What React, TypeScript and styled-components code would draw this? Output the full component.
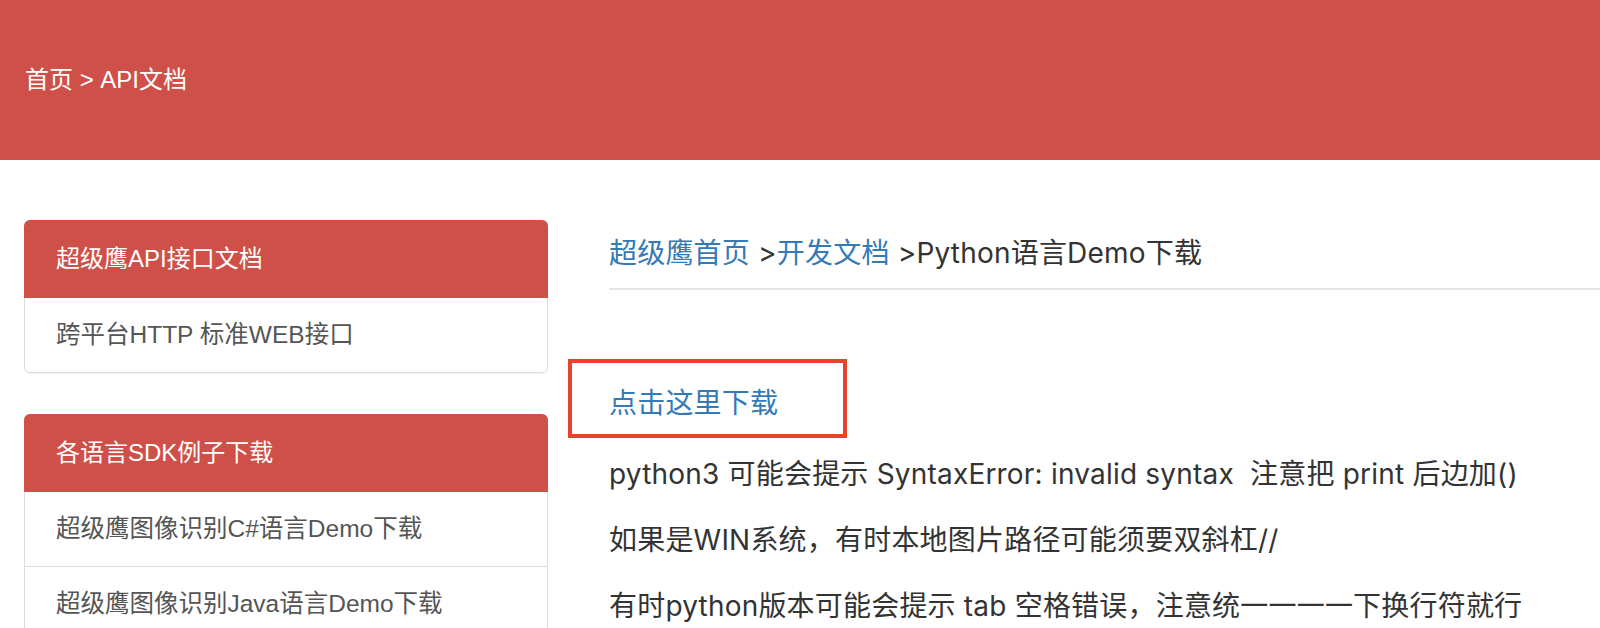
import React from "react";
import styled, { createGlobalStyle } from "styled-components";

const GlobalStyle = createGlobalStyle`
  html, body {
    margin: 0;
    padding: 0;
    background: #ffffff;
  }
  body {
    font-family: "Liberation Sans", "Noto Sans CJK SC", sans-serif;
    color: #333333;
    overflow: hidden;
  }
  * { box-sizing: border-box; }
`;

const RED = "#cf5048";

const Page = styled.div`
  width: 1600px;
  height: 628px;
  overflow: hidden;
`;

const TopBar = styled.header`
  height: 160px;
  background: ${RED};
  display: flex;
  align-items: center;
  padding-left: 25px;
  color: #ffffff;
  font-size: 24px;
  line-height: 30px;
`;

const Body = styled.div`
  display: flex;
  align-items: flex-start;
  padding: 60px 0 0 24px;
`;

const Sidebar = styled.aside`
  width: 524px;
  flex: none;
  display: flex;
  flex-direction: column;
  gap: 41px;
`;

const Panel = styled.section`
  border: 1px solid #dddddd;
  border-radius: 6px;
  background: #ffffff;
  box-shadow: 0 1px 1px rgba(0, 0, 0, 0.05);
`;

const PanelHeading = styled.div`
  margin: -1px -1px 0;
  height: 78px;
  background: ${RED};
  border-radius: 6px 6px 0 0;
  display: flex;
  align-items: center;
  padding-left: 32px;
  color: #ffffff;
  font-size: 24px;
  line-height: 30px;
`;

const PanelItem = styled.div<{ $last?: boolean }>`
  height: ${(p) => (p.$last ? "74px" : "75px")};
  display: flex;
  align-items: center;
  padding-left: 31px;
  color: #555555;
  font-size: 24.5px;
  line-height: 30px;
  white-space: nowrap;
  border-bottom: ${(p) => (p.$last ? "none" : "1px solid #dddddd")};
`;

const Main = styled.main`
  flex: 1;
  margin-left: 61px;
  min-width: 0;
  font-family: "Inter", "Noto Sans CJK SC", sans-serif;
  letter-spacing: 0.2px;
`;

const Crumbs = styled.div`
  padding: 13px 0 15px;
  border-bottom: 2px solid #e5e5e5;
  font-size: 28px;
  line-height: 40px;
  color: #333333;
  white-space: nowrap;
`;

const Link = styled.a`
  color: #337ab7;
  text-decoration: none;
`;

const DownloadLine = styled.p`
  position: relative;
  margin: 93px 0 31px;
  font-size: 28px;
  line-height: 40px;
`;

const Annotation = styled.span`
  position: absolute;
  left: -41px;
  top: -24px;
  width: 279px;
  height: 79px;
  border: 4px solid #e8432d;
  pointer-events: none;
`;

const Note = styled.p`
  margin: 0 0 26px;
  font-size: 28px;
  line-height: 40px;
  color: #333333;
  white-space: nowrap;
`;

export default function App() {
  return (
    <Page>
      <GlobalStyle />
      <TopBar>首页 &gt; API文档</TopBar>
      <Body>
        <Sidebar>
          <Panel>
            <PanelHeading>超级鹰API接口文档</PanelHeading>
            <PanelItem $last>跨平台HTTP 标准WEB接口</PanelItem>
          </Panel>
          <Panel>
            <PanelHeading>各语言SDK例子下载</PanelHeading>
            <PanelItem>超级鹰图像识别C#语言Demo下载</PanelItem>
            <PanelItem>超级鹰图像识别Java语言Demo下载</PanelItem>
            <PanelItem>超级鹰图像识别PHP语言Demo下载</PanelItem>
          </Panel>
        </Sidebar>
        <Main>
          <Crumbs>
            <Link href="#">超级鹰首页</Link> &gt;<Link href="#">开发文档</Link> &gt;Python语言Demo下载
          </Crumbs>
          <DownloadLine>
            <Link href="#">点击这里下载</Link>
            <Annotation />
          </DownloadLine>
          <Note>python3 可能会提示 SyntaxError: invalid syntax &nbsp;注意把 print 后边加()</Note>
          <Note>如果是WIN系统，有时本地图片路径可能须要双斜杠//</Note>
          <Note>有时python版本可能会提示 tab 空格错误，注意统一一一一下换行符就行</Note>
        </Main>
      </Body>
    </Page>
  );
}
